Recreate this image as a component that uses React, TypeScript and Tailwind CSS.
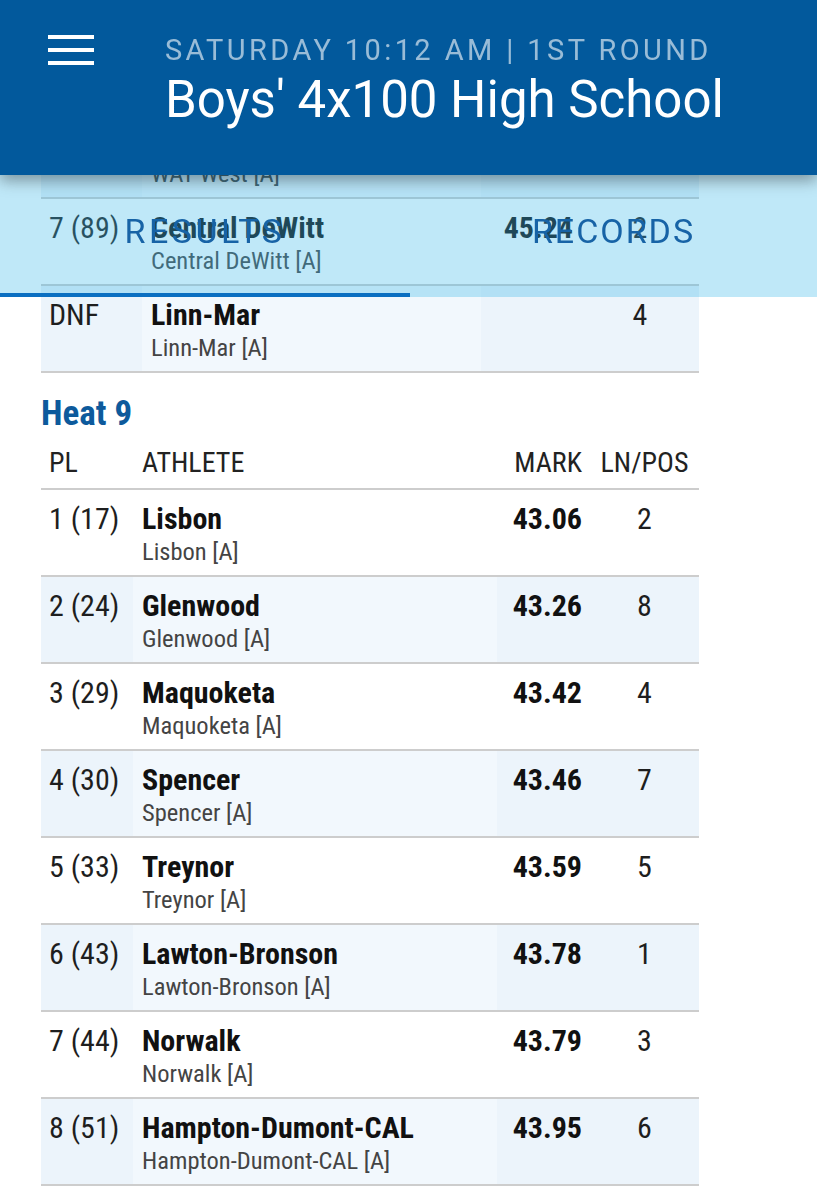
import React from "react";

type Row = { pl: string; name: string; team: string; mark: string; ln: string };

const heat9: Row[] = [
  { pl: "1 (17)", name: "Lisbon", team: "Lisbon [A]", mark: "43.06", ln: "2" },
  { pl: "2 (24)", name: "Glenwood", team: "Glenwood [A]", mark: "43.26", ln: "8" },
  { pl: "3 (29)", name: "Maquoketa", team: "Maquoketa [A]", mark: "43.42", ln: "4" },
  { pl: "4 (30)", name: "Spencer", team: "Spencer [A]", mark: "43.46", ln: "7" },
  { pl: "5 (33)", name: "Treynor", team: "Treynor [A]", mark: "43.59", ln: "5" },
  { pl: "6 (43)", name: "Lawton-Bronson", team: "Lawton-Bronson [A]", mark: "43.78", ln: "1" },
  { pl: "7 (44)", name: "Norwalk", team: "Norwalk [A]", mark: "43.79", ln: "3" },
  { pl: "8 (51)", name: "Hampton-Dumont-CAL", team: "Hampton-Dumont-CAL [A]", mark: "43.95", ln: "6" },
];

const prevHeat: Row[] = [
  { pl: "6 (85)", name: "WAT West", team: "WAT West [A]", mark: "45.19", ln: "6" },
  { pl: "7 (89)", name: "Central DeWitt", team: "Central DeWitt [A]", mark: "45.24", ln: "2" },
  { pl: "DNF", name: "Linn-Mar", team: "Linn-Mar [A]", mark: "", ln: "4" },
];

function DataRow({ r, shaded, cols }: { r: Row; shaded: boolean; cols: string }) {
  return (
    <div className={`grid ${cols} border-b-2 border-[#cdcdcd] ${shaded ? "bg-[#ecf4fb]" : "bg-white"}`}>
      <div className="pl-2 pt-[12px] text-[30px] leading-[34px] text-[#1e1e1e]">{r.pl}</div>
      <div className={`pl-[9px] pt-[12px] pb-[8px] ${shaded ? "bg-[#f2f8fd]" : ""}`}>
        <div className="text-[30px] leading-[34px] font-bold text-[#111]">{r.name}</div>
        <div className="mt-[1px] text-[24.5px] leading-[30px] text-[#444]">{r.team}</div>
      </div>
      <div className="pr-2 pt-[12px] text-right text-[30px] leading-[34px] font-bold text-[#111]">{r.mark}</div>
      <div className="pt-[12px] text-center text-[30px] leading-[34px] text-[#1e1e1e]">{r.ln}</div>
    </div>
  );
}

export default function App() {
  const h9cols = "grid-cols-[92px_364px_93px_109px]";
  const prevCols = "grid-cols-[101px_339px_100px_118px]";
  return (
    <div className="relative min-h-[1200px] bg-white font-['Roboto',sans-serif]">
      {/* Header */}
      <header className="fixed inset-x-0 top-0 z-20 h-[175px] bg-[#02599c] shadow-[0_6px_14px_rgba(0,0,0,0.35)]">
        <div className="flex">
          <div className="ml-[48px] mt-[35px] flex h-[30px] w-[46px] flex-col justify-between">
            <span className="block h-[4px] w-full bg-white" />
            <span className="block h-[4px] w-full bg-white" />
            <span className="block h-[4px] w-full bg-white" />
          </div>
          <div className="ml-[71px] mt-[33px] flex flex-col">
            <div className="text-[29px] leading-[34px] tracking-[3.4px] text-white/60">
              SATURDAY 10:12 AM | 1ST ROUND
            </div>
            <div className="mt-[3px] text-[51px] leading-[60px] text-white">Boys' 4x100 High School</div>
          </div>
        </div>
      </header>

      {/* Tabs */}
      <nav className="fixed inset-x-0 top-[175px] z-10 flex h-[122px] flex-col bg-[rgba(60,185,233,0.33)]">
        <div className="flex flex-1">
          <div className="flex w-[410px] items-center justify-center pb-[6px] text-[34px] tracking-[3.5px] text-[#1763a6]">
            RESULTS
          </div>
          <div className="flex flex-1 items-center justify-center pb-[6px] text-[34px] tracking-[2px] text-[#1763a6]">
            RECORDS
          </div>
        </div>
        <div className="h-[4px] w-[410px] bg-[#0b6fc1]" />
      </nav>

      {/* Content */}
      <main className="pl-[41px] pt-[110px] font-['Roboto_Condensed',Roboto,sans-serif] [font-stretch:condensed]">
        <div className="w-[658px]">
          <div className="border-t-2 border-[#cdcdcd]">
            {prevHeat.map((r, i) => (
              <DataRow key={r.pl} r={r} shaded={i !== 1} cols={prevCols} />
            ))}
          </div>

          <h2 className="mt-[22px] text-[35px] leading-[38px] font-bold text-[#0d5a9c]">Heat 9</h2>

          <div className={`mt-[14px] grid ${h9cols} border-b-2 border-[#cdcdcd] pb-[9px] text-[28px] leading-[32px] text-[#222]`}>
            <div className="pl-2">PL</div>
            <div className="pl-[9px]">ATHLETE</div>
            <div className="pr-2 text-right">MARK</div>
            <div className="text-center">LN/POS</div>
          </div>
          {heat9.map((r, i) => (
            <DataRow key={r.pl} r={r} shaded={i % 2 === 1} cols={h9cols} />
          ))}
        </div>
      </main>
    </div>
  );
}
